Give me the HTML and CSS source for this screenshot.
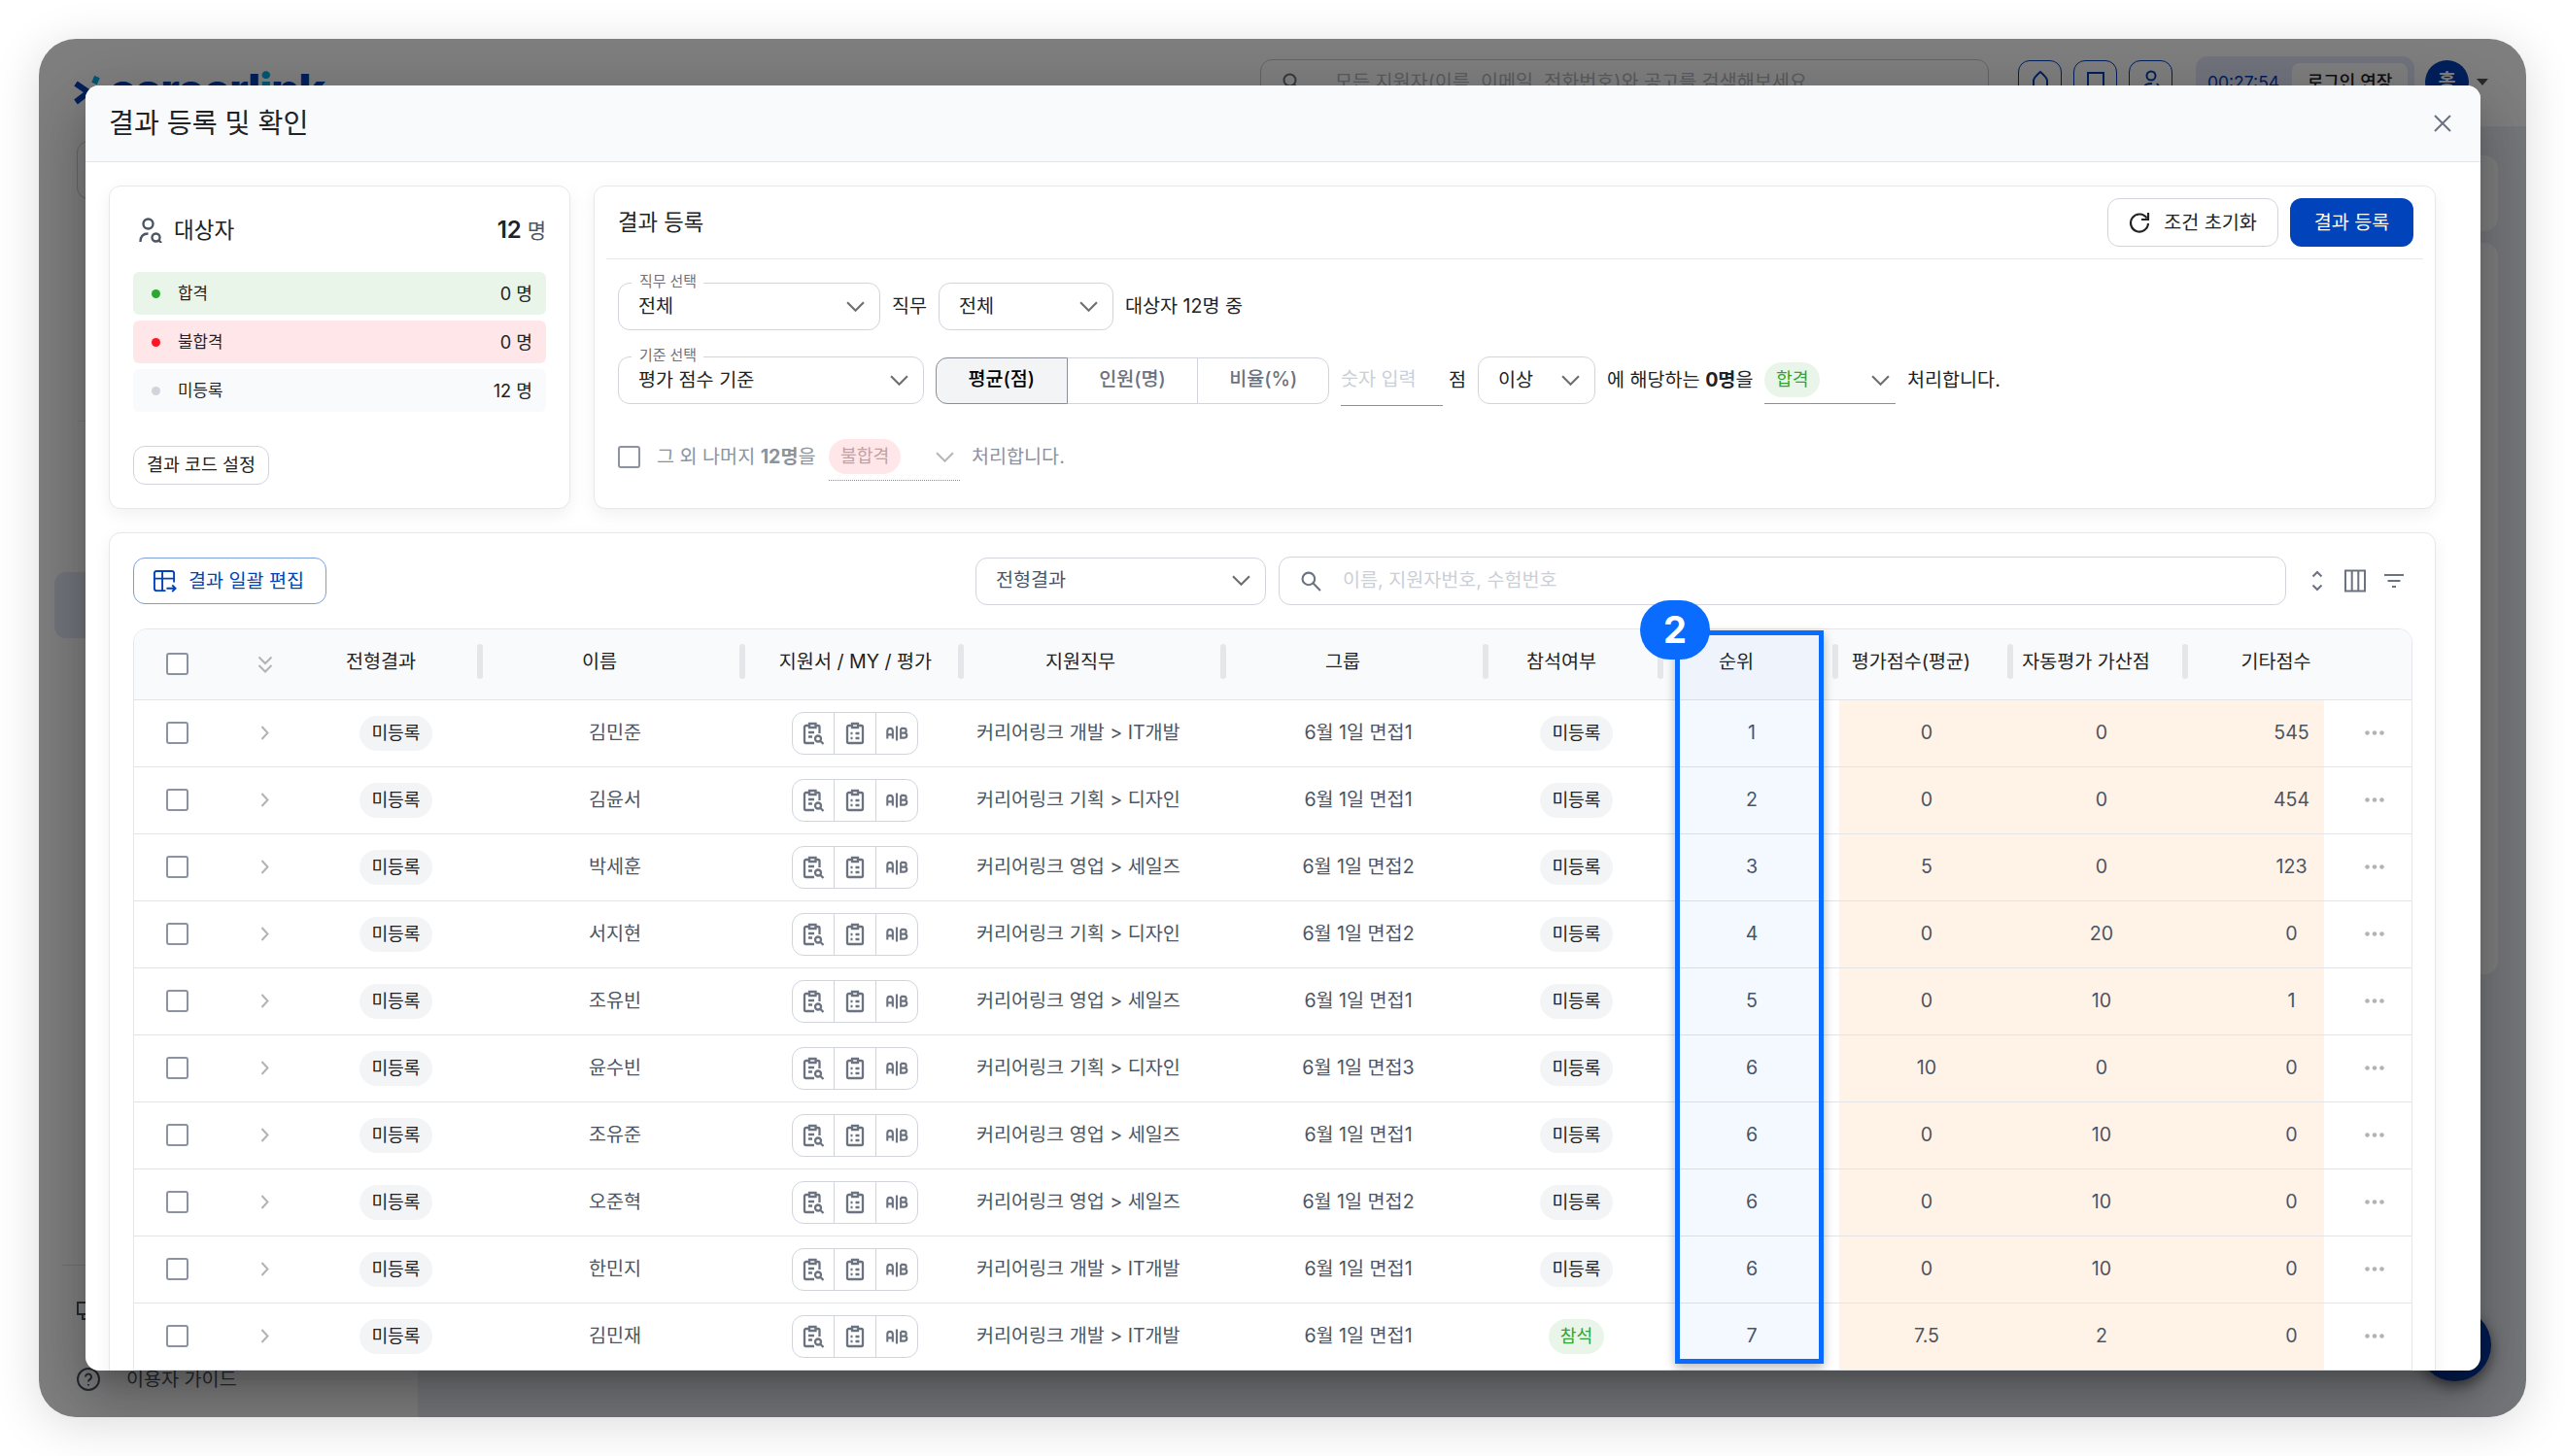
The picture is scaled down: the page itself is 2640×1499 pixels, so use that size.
FILE: index.html
```html
<!DOCTYPE html>
<html lang="ko">
<head>
<meta charset="UTF-8">
<title>결과 등록 및 확인</title>
<link rel="stylesheet" href="styles.css">
</head>
<body>
<svg class="sprite">
<symbol id="chevron" viewBox="0 0 18 10"><path d="M1 1l8 8 8-8"/></symbol>
<symbol id="search" viewBox="0 0 20 20"><circle cx="7.5" cy="7.5" r="6"/><path d="M12 12l7 7"/></symbol>
<symbol id="doc-search" viewBox="0 0 24 24"><path d="M8.500 4H4.500A1.500 1.500 0 0 0 3 5.500V20.500A1.500 1.500 0 0 0 4.500 22H13M14.500 4H17A1.500 1.500 0 0 1 18.500 5.500V12M8 2H14.500V6H8ZM7 11H13M7 15.500H11"/><circle cx="17" cy="17.500" r="3"/><path d="M19.500 20l3 3"/></symbol>
<symbol id="doc-list" viewBox="0 0 24 24"><path d="M9 4H5.500A1.500 1.500 0 0 0 4 5.500V20.500A1.500 1.500 0 0 0 5.500 22H18.500A1.500 1.500 0 0 0 20 20.500V5.500A1.500 1.500 0 0 0 18.500 4H15M9 2H15V6H9ZM7.500 12H9.500M7.500 17H9.500M12.500 12H16.500M12.500 17H16.500"/></symbol>
<symbol id="ab" viewBox="0 0 26 18"><path d="M2.500 15V6.500a3 3 0 0 1 6 0V15M2.500 10.500H8.500M13 1V17M17.500 3.500V14H21.500a2.700 2.700 0 0 0 0-5.400H17.500M17.500 3.500H21a2.500 2.500 0 0 1 0 5"/></symbol>
</svg>
<div class="frame">
<div class="app">
<div class="topbar">
<svg class="logo-mark" viewBox="0 0 36 32"><path class="navy" d="M2 9L15 18 2 28M28 26L20 18"/><path class="cyan" d="M21 9L24 2"/></svg>
<div class="logo">careerl<span>i</span>nk</div>
<div class="top-search"><svg><use href="#search"/></svg>모든 지원자(이름, 이메일, 전화번호)와 공고를 검색해보세요</div>
<div class="top-btn"><svg viewBox="0 0 24 24"><path d="M5 20V11Q5 8 12 2Q19 8 19 11V20Z"/></svg></div>
<div class="top-btn"><svg viewBox="0 0 24 24"><path d="M4 22V3H20V22"/></svg></div>
<div class="top-btn"><svg viewBox="0 0 24 24"><circle cx="12" cy="6" r="4.500"/><path d="M4 22c0-8 5-8 9-8M18 14l3 4"/></svg></div>
<div class="timer">00:27:54<b>로그인 연장</b></div>
<div class="avatar">홍</div>
<div class="caret"></div>
</div>
<div class="app-body">
<div class="sidebar">
<div class="side-box"></div>
<div class="side-line"></div>
<div class="side-active"></div>
<div class="side-foot">
<div class="side-item"><svg viewBox="0 0 24 24"><path d="M1 3H23V15H1ZM6 15V20H12"/></svg></div>
<div class="side-item"><svg viewBox="0 0 24 24"><circle cx="12" cy="12" r="11"/><path d="M9 9.500a3 3 0 1 1 4.500 2.600Q12 13 12 14.500M12 17V18.500"/></svg>이용자 가이드</div>
</div>
</div>
<div class="content">
<div class="content-card small"></div>
<div class="content-card"></div>
</div>
</div>
</div>
<div class="fab"></div>
<div class="backdrop"></div>
</div>

<div class="modal">
<div class="modal-head">결과 등록 및 확인<svg viewBox="0 0 18 18"><path d="M1 1L17 17M17 1L1 17"/></svg></div>
<div class="modal-body">
<div class="cards">
<div class="card target">
<div class="target-head">
<svg viewBox="0 0 24 26"><circle cx="9.500" cy="6.500" r="5"/><path d="M1.500 25C1.500 19 4 16.500 9.500 16.500"/><circle cx="17.500" cy="20.500" r="4"/><path d="M20.500 23.500l2.500 2.500"/></svg>
대상자<span><b>12</b> 명</span>
</div>
<div class="stat pass"><i></i>합격<span>0 명</span></div>
<div class="stat fail"><i></i>불합격<span>0 명</span></div>
<div class="stat none"><i></i>미등록<span>12 명</span></div>
<button class="code-btn">결과 코드 설정</button>
</div>

<div class="card register">
<div class="register-head">
<span>결과 등록</span>
<button class="reset"><svg viewBox="0 0 22 22"><path d="M18.500 6.500A9 9 0 1 0 20 12M20 1V8H13"/></svg>조건 초기화</button>
<button class="primary">결과 등록</button>
</div>
<div class="line first">
<div class="select job"><label>직무 선택</label>전체<svg><use href="#chevron"/></svg></div>
<span class="t-job">직무</span>
<div class="select all">전체<svg><use href="#chevron"/></svg></div>
<span>대상자 12명 중</span>
</div>
<div class="line second">
<div class="select base"><label>기준 선택</label>평가 점수 기준<svg><use href="#chevron"/></svg></div>
<div class="toggle"><div class="on">평균(점)</div><div>인원(명)</div><div>비율(%)</div></div>
<div class="num">숫자 입력</div>
<span class="t-unit">점</span>
<div class="select over">이상<svg><use href="#chevron"/></svg></div>
<span class="t-match">에 해당하는 <b>0명</b>을</span>
<div class="under"><em class="chip green">합격</em><svg><use href="#chevron"/></svg></div>
<span>처리합니다.</span>
</div>
<div class="line third">
<i class="check"></i>
<span class="t-rest">그 외 나머지 <b>12명</b>을</span>
<div class="under dotted"><em class="chip red">불합격</em><svg><use href="#chevron"/></svg></div>
<span>처리합니다.</span>
</div>
</div>
</div>

<div class="card list">
<div class="toolbar">
<button class="bulk"><svg viewBox="0 0 26 26"><path d="M14 23H4.500A2.500 2.500 0 0 1 2 20.500V4.500A2.500 2.500 0 0 1 4.500 2H20.500A2.500 2.500 0 0 1 23 4.500V14M2 10H23M10.500 2V23M15 20.500H24M21 17L24.500 20.500L21 24"/></svg>결과 일괄 편집</button>
<div class="select result">전형결과<svg><use href="#chevron"/></svg></div>
<div class="search"><svg><use href="#search"/></svg>이름, 지원자번호, 수험번호</div>
<svg class="tool sort" viewBox="0 0 12 22"><path d="M1.500 6.500L6 2l4.500 4.500M1.500 15.500L6 20l4.500-4.500"/></svg>
<svg class="tool cols" viewBox="0 0 24 24"><path d="M2 1.500H22V22.500H2ZM8.700 1.500V22.500M15.300 1.500V22.500"/></svg>
<svg class="tool filter" viewBox="0 0 22 16"><path d="M1 2H21M4.500 8H17.500M9 14H13"/></svg>
</div>
<div class="table">
<div class="row thead">
<div><i class="check"></i></div>
<div><svg class="dbl" viewBox="0 0 16 18"><path d="M1.500 1.500L8 8l6.500-6.500M1.500 10L8 16.500l6.500-6.500"/></svg></div>
<div class="h">전형결과</div>
<div class="h">이름</div>
<div class="h mid">지원서 / MY / 평가</div>
<div class="h">지원직무</div>
<div class="h">그룹</div>
<div class="h">참석여부</div>
<div class="h">순위</div>
<div class="h">평가점수(평균)</div>
<div class="h">자동평가 가산점</div>
<div class="h etc">기타점수</div>
<div></div>
</div>
<div id="rows"></div>
</div>
</div>
</div>
<div class="marker"><b>2</b></div>
</div>
<script src="script.js"></script>
</body>
</html>
```
FILE: styles.css
```css
* {
box-sizing: border-box;
}

body {
margin: 0;
width: 2640px;
height: 1499px;
overflow: hidden;
position: relative;
background: #fff;
font-family: Inter, 'Noto Sans CJK KR', sans-serif;
font-size: 19.6px;
line-height: 28px;
color: #222;
}

svg {
fill: none;
stroke: currentColor;
stroke-width: 2;
flex: none;
}

button {
font: inherit;
color: inherit;
background: #fff;
border: 1px solid #d1d4da;
border-radius: 12px;
display: flex;
align-items: center;
justify-content: center;
padding: 0;
}

em, i {
font-style: normal;
}

.sprite {
position: absolute;
width: 0;
height: 0;
}

/* 배경 앱 화면 */
.frame {
position: absolute;
left: 40px;
top: 40px;
width: 2560px;
height: 1419px;
border-radius: 38px;
overflow: hidden;
}

body::before {
content: '';
position: absolute;
left: 40px;
top: 40px;
width: 2560px;
height: 1419px;
border-radius: 38px;
box-shadow: 0 8px 50px rgba(0,0,0,0.14);
}

.app {
height: 100%;
display: flex;
flex-direction: column;
background: #fff;
}

.topbar {
height: 90px;
flex: none;
display: flex;
align-items: center;
padding: 0 36px 2px;
}

.logo-mark {
width: 36px;
height: 32px;
margin-top: 18px;
stroke-width: 6;
}

.navy {
stroke: #0040b8;
}

.cyan {
stroke: #00b0e8;
}

.logo {
font-size: 47px;
font-weight: 800;
letter-spacing: -1.4px;
width: 240px;
margin-top: 18px;
color: #0040b8;
}

.logo span {
color: #00b0e8;
}

.top-search {
width: 750px;
height: 46px;
margin-left: 945px;
margin-right: 30px;
border: 1px solid #c6c9d0;
border-radius: 12px;
display: flex;
align-items: center;
padding-left: 22px;
color: #b4b8c0;
white-space: nowrap;
}

.top-search svg {
width: 20px;
height: 20px;
margin: 2px 34px 0 0;
color: #6b7280;
}

.top-btn {
width: 45px;
height: 45px;
margin-right: 12px;
border: 1px solid #0040b8;
border-radius: 12px;
display: flex;
align-items: center;
justify-content: center;
color: #0040b8;
}

.top-btn svg {
width: 24px;
height: 24px;
}

.timer {
width: 225px;
height: 52px;
margin-left: 12px;
border-radius: 12px;
background: #e3e9fb;
color: #0040b8;
font-size: 17.5px;
display: flex;
align-items: center;
justify-content: space-between;
padding: 2px 7px 0 12px;
}

.timer b {
width: 119px;
height: 40px;
line-height: 40px;
border-radius: 8px;
background: #fff;
color: #222;
font-weight: 500;
font-size: 18px;
text-align: center;
}

.avatar {
width: 45px;
height: 45px;
line-height: 43px;
margin: 0 8px 0 11px;
border-radius: 50%;
background: #0040b8;
color: #fff;
font-weight: 700;
text-align: center;
}

.caret {
border: 6px solid transparent;
border-top: 7px solid #555;
border-bottom: 0;
}

.app-body {
flex: 1;
display: flex;
background: #eceef6;
}

.sidebar {
width: 390px;
background: #fff;
display: flex;
flex-direction: column;
}

.side-box {
height: 60px;
margin: 15px 24px 0 39px;
border: 1px solid #ccc;
border-radius: 12px;
}

.side-line {
margin: 228px 24px 0 39px;
border-top: 1px solid #eee;
}

.side-active {
height: 68px;
margin: 155px 24px 0 16px;
border-radius: 12px;
background: #e6ebfa;
}

.side-foot {
margin: auto 24px 4px;
border-top: 1px solid #e2e2e2;
padding-top: 12px;
}

.side-item {
height: 70px;
padding-left: 15px;
display: flex;
align-items: center;
gap: 27px;
font-size: 19.6px;
color: #4b5563;
}

.side-item svg {
width: 24px;
height: 24px;
}

.content {
flex: 1;
padding: 30px 29px 0;
}

.content-card {
height: 753px;
border-radius: 14px;
background: #fff;
}

.content-card.small {
height: 78px;
margin-bottom: 12px;
}

.fab {
position: absolute;
right: 36px;
bottom: 37px;
width: 75px;
height: 75px;
border-radius: 50%;
background: #0038a4;
box-shadow: 0 5px 14px rgba(0,0,0,0.5);
}

.backdrop {
position: absolute;
inset: 0;
background: rgba(0,0,0,0.5);
}

/* 모달 */
.modal {
position: absolute;
left: 88px;
top: 88px;
width: 2465px;
height: 1323px;
border-radius: 14px;
overflow: hidden;
background: #fff;
}

/* 모달 그림자는 프레임 안쪽까지만 */
.frame::after {
content: '';
position: absolute;
left: 48px;
top: 48px;
width: 2465px;
height: 1323px;
border-radius: 14px;
box-shadow: 0 17px 23px -10px rgba(0,0,0,0.2), 0 36px 57px 4px rgba(0,0,0,0.14), 0 14px 69px 12px rgba(0,0,0,0.12);
}

.modal-head {
height: 79px;
display: flex;
align-items: center;
justify-content: space-between;
padding: 0 30px 0 24px;
background: #f9fafc;
border-bottom: 1px solid #e2e4ea;
font-size: 28.2px;
}

.modal-head svg {
width: 18px;
height: 18px;
color: #6b7280;
}

.modal-body {
padding: 24px 46px 0 24px;
}

.cards {
display: flex;
gap: 24px;
}

.card {
border: 1px solid #e5e7eb;
border-radius: 12px;
background: #fff;
box-shadow: 0 6px 18px rgba(0,0,0,0.06);
}

.target {
width: 475px;
height: 333px;
padding: 24px 24px 0;
}

.target-head {
height: 42px;
display: flex;
align-items: center;
padding-left: 6px;
margin-bottom: 22px;
font-size: 22.5px;
}

.target-head svg {
width: 24px;
height: 26px;
margin-right: 12px;
color: #4b5563;
stroke-width: 2.400;
}

.target-head span {
margin-left: auto;
color: #4b5563;
font-size: 21px;
}

.target-head b {
color: #222;
font-size: 24px;
font-weight: 600;
}

.stat {
height: 44px;
margin-bottom: 6px;
padding: 0 14px 0 19px;
border-radius: 6px;
display: flex;
align-items: center;
font-size: 16.8px;
}

.stat i {
width: 9px;
height: 9px;
margin: 0 18px 0 0;
border-radius: 50%;
}

.stat span {
margin-left: auto;
font-size: 18.2px;
}

.pass {
background: #eaf5ea;
}

.pass i {
background: #2fa533;
}

.fail {
background: #ffe7e9;
}

.fail i {
background: #ff1425;
}

.none {
background: #f9fafc;
}

.none i {
background: #d1d5db;
}

.code-btn {
width: 140px;
height: 40px;
margin-top: 35px;
padding-bottom: 2px;
font-size: 18.4px;
}

.register {
flex: 1;
padding: 0 12px;
}

.register-head {
height: 75px;
padding: 0 10px 0 12px;
display: flex;
align-items: center;
gap: 12px;
border-bottom: 1px solid #e5e7eb;
font-size: 22.3px;
}

.register-head > span {
margin-right: auto;
}

.register-head button {
height: 50px;
font-size: 19.6px;
}

.reset {
width: 176px;
gap: 14px;
}

.reset svg {
width: 22px;
height: 22px;
stroke-width: 2.200;
}

.register-head .primary {
width: 127px;
border: 0;
background: #0043ba;
color: #fff;
}

.line {
display: flex;
align-items: center;
padding-left: 12px;
white-space: nowrap;
height: 49px;
}

.line.first {
margin-top: 24px;
}

.line.second {
margin-top: 27px;
}

.line.third {
margin-top: 30px;
color: #8b93a1;
}

.line > span {
padding-bottom: 2px;
}

.select {
position: relative;
height: 49px;
border: 1px solid #d1d4da;
border-radius: 12px;
display: flex;
align-items: center;
justify-content: space-between;
padding: 0 15px 2px 20px;
}

.select svg, .under svg {
width: 19px;
height: 11px;
margin-top: 1px;
color: #6e6e6e;
}

/* 테두리 위에 걸치는 라벨 */
.select label {
position: absolute;
left: 13px;
top: -16px;
padding: 0 7px 0 8px;
background: #fff;
font-size: 14.9px;
color: #6b7280;
}

.job {
width: 270px;
}

.t-job {
width: 60px;
text-align: center;
}

.all {
width: 180px;
margin-right: 12px;
}

.base {
width: 315px;
margin-right: 12px;
}

.toggle {
display: flex;
width: 405px;
height: 48px;
border: 1px solid #d1d4da;
border-radius: 12px;
color: #6b7280;
font-weight: 500;
}

.toggle div {
flex: 1;
text-align: center;
line-height: 43px;
}

.toggle div + div + div {
border-left: 1px solid #d1d4da;
}

.toggle .on {
margin: -1px 0 -1px -1px;
border: 1px solid #8a8f98;
border-radius: 12px 0 0 12px;
background: #f3f4f6;
color: #000;
}

.num {
width: 105px;
height: 51px;
line-height: 47px;
margin: 2px 0 0 12px;
border-bottom: 1px solid #8b8f97;
color: #cbcfd6;
}

.t-unit {
width: 36px;
text-align: center;
padding-right: 6px;
}

.over {
width: 121px;
margin-right: 12px;
}

.t-match {
margin-right: 11px;
width: 151px;
}

.under {
width: 135px;
height: 49px;
margin-right: 12px;
padding-right: 6px;
border-bottom: 1px solid #8b8f97;
display: flex;
align-items: center;
justify-content: space-between;
}

.under.dotted {
border-bottom: 1px dotted #8b8f97;
}

.under.dotted svg {
color: #b7b7b7;
}

.chip {
height: 36px;
line-height: 34px;
padding: 0 12px;
border-radius: 18px;
font-size: 18.2px;
color: #222;
background: #f3f4f6;
}

.green {
background: #eaf5ea;
color: #2fa533;
}

.red {
background: #ffe7e9;
color: #bfa0a3;
}

.check {
display: block;
width: 23px;
height: 23px;
border: 2px solid #8b93a1;
border-radius: 3px;
background: #fff;
}

.t-rest {
width: 177px;
margin-left: 17px;
}

/* 지원자 목록 */
.list {
height: 900px;
margin-top: 24px;
padding: 24px 23px 0 24px;
}

.toolbar {
display: flex;
align-items: center;
height: 50px;
margin-bottom: 24px;
}

.bulk {
width: 199px;
height: 48px;
padding-right: 3px;
gap: 12px;
border-color: #7a9ede;
color: #0043ba;
}

.bulk svg {
width: 25px;
height: 25px;
}

.result {
width: 299px;
margin-left: auto;
margin-right: 13px;
color: #4b5563;
}

.search {
width: 1037px;
height: 50px;
padding: 0 0 2px 22px;
border: 1px solid #d1d4da;
border-radius: 12px;
display: flex;
align-items: center;
color: #cbcfd6;
}

.search svg {
width: 21px;
height: 21px;
margin: 2px 22px 0 0;
color: #6b7280;
}

.tool {
color: #6b7280;
}

.sort {
width: 12px;
height: 22px;
margin-left: 26px;
}

.cols {
width: 24px;
height: 24px;
margin-left: 21px;
}

.filter {
width: 22px;
height: 16px;
margin: 0 8px 0 17px;
}

.table {
border: 1px solid #e5e7eb;
border-radius: 14px 14px 0 0;
overflow: hidden;
}

.row {
display: grid;
grid-template-columns: 90px 90px 180px 270px 225px 270px 270px 180px 180px 180px 180px 139px 1fr;
height: 69px;
border-bottom: 1px solid #e2e4e8;
color: #4b5563;
}

.row > div {
display: flex;
align-items: center;
justify-content: center;
white-space: nowrap;
padding-bottom: 2px;
}

.row > div:nth-child(-n+3), .row > div:nth-child(8), .row > div:nth-child(5) {
padding-right: 1px;
padding-bottom: 1px;
}

.row > div.path {
justify-content: flex-start;
padding-left: 12px;
}

.row > .score {
background: #fff3e7;
}

.row > .etc {
padding-left: 72px;
}

.row > .more {
padding-left: 14px;
}

.more svg {
width: 20px;
height: 5px;
fill: #b3b3b3;
stroke: none;
}

.arrow {
width: 9px;
height: 15px;
color: #b3b3b3;
}

.dbl {
width: 16px;
height: 18px;
color: #b3b3b3;
}

.thead {
height: 73px;
background: #f9fafc;
color: #222;
}

.row.thead > div.h:nth-child(n) {
padding: 0 32px 7px 0;
position: relative;
}

.row.thead > div.mid:nth-child(n) {
padding-right: 0;
}

.row.thead > div.etc:nth-child(n) {
padding-left: 72px;
}

.thead > .h:not(.etc)::after {
content: '';
position: absolute;
right: 1px;
top: 15px;
width: 6px;
height: 36px;
border-radius: 3px;
background: #e5e6e9;
}

.icons {
display: flex;
width: 130px;
height: 44px;
border: 1px solid #d1d4da;
border-radius: 12px;
color: #6b7280;
}

.icons span {
flex: 1;
display: flex;
align-items: center;
justify-content: center;
}

.icons span + span {
border-left: 1px solid #d1d4da;
}

.icons svg {
width: 24px;
height: 24px;
stroke-width: 2.300;
}

/* 순위 컬럼 강조 */
.marker {
position: absolute;
left: 1636px;
top: 561px;
width: 153px;
height: 755px;
border: 5px solid #0a6cff;
background: rgba(10,90,255,0.045);
box-shadow: 0 4px 10px rgba(0,0,0,0.28);
}

.marker b {
position: absolute;
left: -41px;
top: -36px;
width: 72px;
height: 61px;
line-height: 61px;
border-radius: 31px;
background: #0a6cff;
color: #fff;
font-size: 38px;
text-align: center;
}
```
FILE: script.js
```js
// 이름, 직무, 그룹, 참석여부, 순위, 평가점수, 가산점, 기타점수
const list = [
['김민준', '개발 > IT개발', 1, '미등록', 1, 0, 0, 545],
['김윤서', '기획 > 디자인', 1, '미등록', 2, 0, 0, 454],
['박세훈', '영업 > 세일즈', 2, '미등록', 3, 5, 0, 123],
['서지현', '기획 > 디자인', 2, '미등록', 4, 0, 20, 0],
['조유빈', '영업 > 세일즈', 1, '미등록', 5, 0, 10, 1],
['윤수빈', '기획 > 디자인', 3, '미등록', 6, 10, 0, 0],
['조유준', '영업 > 세일즈', 1, '미등록', 6, 0, 10, 0],
['오준혁', '영업 > 세일즈', 2, '미등록', 6, 0, 10, 0],
['한민지', '개발 > IT개발', 1, '미등록', 6, 0, 10, 0],
['김민재', '개발 > IT개발', 1, '참석', 7, 7.5, 2, 0]
];

document.getElementById('rows').innerHTML = list.map(([name, job, group, attend, rank, avg, plus, etc]) => `
<div class="row">
<div><i class="check"></i></div>
<div><svg class="arrow" viewBox="0 0 9 15"><path d="M1.500 1l6 6.500-6 6.500"/></svg></div>
<div><em class="chip">미등록</em></div>
<div>${name}</div>
<div><div class="icons"><span><svg><use href="#doc-search"/></svg></span><span><svg><use href="#doc-list"/></svg></span><span><svg><use href="#ab"/></svg></span></div></div>
<div class="path">커리어링크 ${job.replace('>', '&gt;')}</div>
<div>6월 1일 면접${group}</div>
<div><em class="chip ${attend === '참석' ? 'green' : ''}">${attend}</em></div>
<div>${rank}</div>
<div class="score">${avg}</div>
<div class="score">${plus}</div>
<div class="score etc">${etc}</div>
<div class="more"><svg viewBox="0 0 20 5"><circle cx="2.500" cy="2.500" r="2.300"/><circle cx="10" cy="2.500" r="2.300"/><circle cx="17.500" cy="2.500" r="2.300"/></svg></div>
</div>`).join('');
```
